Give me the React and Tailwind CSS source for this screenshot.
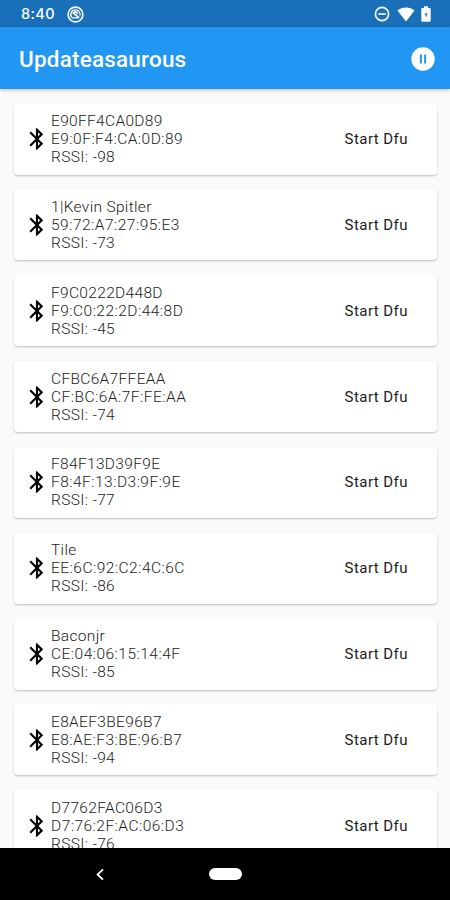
import { MdBluetooth } from "react-icons/md";

const devices = [
  { name: "E90FF4CA0D89", address: "E9:0F:F4:CA:0D:89", rssi: -98 },
  { name: "1|Kevin Spitler", address: "59:72:A7:27:95:E3", rssi: -73 },
  { name: "F9C0222D448D", address: "F9:C0:22:2D:44:8D", rssi: -45 },
  { name: "CFBC6A7FFEAA", address: "CF:BC:6A:7F:FE:AA", rssi: -74 },
  { name: "F84F13D39F9E", address: "F8:4F:13:D3:9F:9E", rssi: -77 },
  { name: "Tile", address: "EE:6C:92:C2:4C:6C", rssi: -86 },
  { name: "Baconjr", address: "CE:04:06:15:14:4F", rssi: -85 },
  { name: "E8AEF3BE96B7", address: "E8:AE:F3:BE:96:B7", rssi: -94 },
  { name: "D7762FAC06D3", address: "D7:76:2F:AC:06:D3", rssi: -76 },
];

function StatusBar() {
  return (
    <div className="h-[27px] shrink-0 bg-[#1a70b8] flex items-center justify-between pl-[21px] pr-[19.5px] pt-[1px] text-white">
      <div className="flex items-center gap-[11px]">
        <span className="font-[Inter,sans-serif] text-[14.5px] leading-none font-medium tracking-[0.4px] w-[35px] pt-px whitespace-nowrap">8:40</span>
        <svg width="17" height="17" viewBox="0 0 17 17" fill="none" stroke="currentColor">
          <circle cx="8.5" cy="8.5" r="7.4" strokeWidth="1.7" />
          <path d="M5.2 11.9A4.7 4.7 0 0 1 8.5 3.8a4.7 4.7 0 0 1 4.5 5.8M5.2 11.9h6" strokeWidth="1.3" />
          <path d="M5.7 6.5l6.6 5.3M7.1 6.1h2.2l1.4 1.7" strokeWidth="1.7" />
        </svg>
      </div>
      <div className="flex items-center">
        <svg width="16" height="16" viewBox="0 0 16 16" fill="none" stroke="currentColor" strokeWidth="1.6">
          <circle cx="8" cy="8" r="6.6" />
          <path d="M4.3 8h7.4" />
        </svg>
        <svg className="ml-[7px]" width="18" height="15" viewBox="0 0 18 15" fill="currentColor">
          <path d="M9 14.5L0.4 3.6C2.8 1.6 5.7 0.5 9 0.5s6.2 1.1 8.6 3.1z" />
        </svg>
        <svg className="ml-[6px]" width="10" height="16" viewBox="0 0 10 16">
          <path d="M3 0.3h4v1.6h1.8c.5 0 .9.4.9.9v12c0 .5-.4.9-.9.9H1.2a.9.9 0 0 1-.9-.9v-12c0-.5.4-.9.9-.9H3z" fill="currentColor" />
          <path d="M5.5 5.8L3.7 9.1h1.1v2.5l1.7-3.4H5.5z" fill="#1a70b8" />
        </svg>
      </div>
    </div>
  );
}

function AppBar() {
  return (
    <header className="relative z-10 h-[62px] shrink-0 bg-[#2196f3] shadow-[0_1px_4px_rgba(0,0,0,0.25)] flex items-center justify-between pl-[19px] pr-[15px] pt-[1px]">
      <h1 className="text-white text-[22.5px] leading-none font-medium tracking-[0.2px] pt-px">Updateasaurous</h1>
      <button aria-label="Pause scan">
        <svg width="24" height="24" viewBox="0 0 24 24">
          <circle cx="12" cy="12" r="11.7" fill="#fff" />
          <path d="M9.9 7.5v9M14.1 7.5v9" stroke="#2196f3" strokeWidth="2" />
        </svg>
      </button>
    </header>
  );
}

function DeviceCard({ device }) {
  return (
    <li className="h-[71px] shrink-0 rounded-[4px] bg-white shadow-[0_1px_2px_rgba(0,0,0,0.24)] flex items-center pl-[10px] pr-[29px]">
      <MdBluetooth className="size-[26px] shrink-0 text-black" />
      <div className="ml-px flex-1 text-[15.5px] leading-[18px] font-light text-[#1c1c1c] whitespace-nowrap tracking-[0.33px]">
        <p>{device.name}</p>
        <p className="tracking-[0.48px]">{device.address}</p>
        <p>RSSI: {device.rssi}</p>
      </div>
      <button className="text-[15px] leading-[18px] font-normal tracking-[0.45px] text-[#1c1c1c]">Start Dfu</button>
    </li>
  );
}

function NavBar() {
  return (
    <nav className="relative z-10 h-[52px] shrink-0 bg-black grid grid-cols-[200px_50px_200px] items-center">
      <svg className="ml-[95px]" width="10" height="13" viewBox="0 0 10 13" fill="none" stroke="#fff" strokeWidth="1.8">
        <path d="M8 1.3L2.6 6.5L8 11.7" />
      </svg>
      <div className="justify-self-center h-[12px] w-[33px] rounded-full bg-white" />
    </nav>
  );
}

export default function App() {
  return (
    <div className="w-[450px] h-[900px] overflow-hidden flex flex-col bg-[#fafafa] font-[Roboto,sans-serif]">
      <StatusBar />
      <AppBar />
      <main className="flex-1 min-h-0 overflow-hidden">
        <ul className="flex flex-col gap-[14.85px] pt-[14.5px] pl-[14px] pr-[13px]">
          {devices.map((device) => (
            <DeviceCard key={device.address} device={device} />
          ))}
        </ul>
      </main>
      <NavBar />
    </div>
  );
}
